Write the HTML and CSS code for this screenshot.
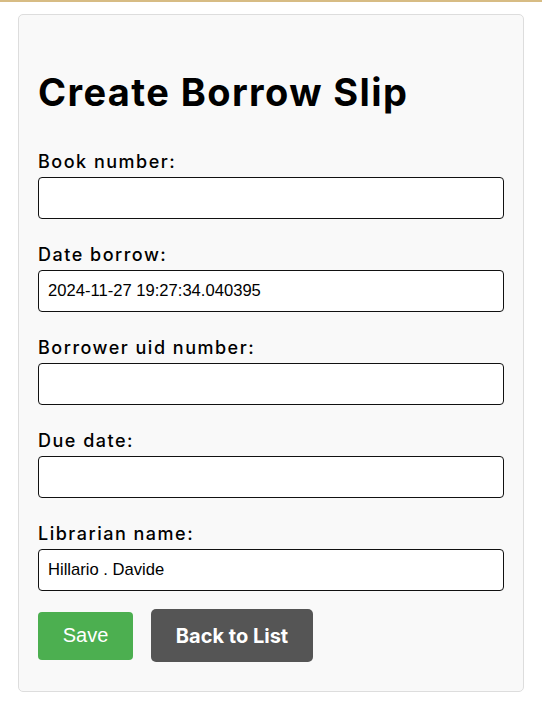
FILE: index.html
```html
<!DOCTYPE html>
<html lang="en">
<head>
<meta charset="utf-8">
<title>Create Borrow Slip</title>
<link rel="stylesheet" href="styles.css">
</head>
<body>
<div class="topbar"></div>
<main class="card">
  <h1 class="title">Create Borrow Slip</h1>
  <form class="form">
    <div class="field">
      <label class="label" for="book">Book number:</label>
      <input class="input" id="book" type="text">
    </div>
    <div class="field">
      <label class="label" for="date">Date borrow:</label>
      <input class="input" id="date" type="text" value="2024-11-27 19:27:34.040395">
    </div>
    <div class="field">
      <label class="label" for="uid">Borrower uid number:</label>
      <input class="input" id="uid" type="text">
    </div>
    <div class="field">
      <label class="label" for="due">Due date:</label>
      <input class="input" id="due" type="text">
    </div>
    <div class="field field-last">
      <label class="label" for="lib">Librarian name:</label>
      <input class="input" id="lib" type="text" value="Hillario . Davide">
    </div>
    <div class="actions">
      <button class="btn btn-save" type="button">Save</button>
      <a class="btn btn-back" href="#">Back to List</a>
    </div>
  </form>
</main>
</body>
</html>
```
FILE: styles.css
```css
* { box-sizing: border-box; }
html, body { margin: 0; padding: 0; background: #ffffff; }
body { font-family: "Inter", "Noto Sans", sans-serif; color: #000; }
.topbar { height: 2px; background: #d7bc84; }
.card {
  width: 506px;
  margin: 12px auto 0;
  background: #f9f9f9;
  border: 1px solid #dddddd;
  border-radius: 5px;
  padding: 20px 19px 29px;
}
.title {
  margin: 34px 0 36px;
  font-size: 38px;
  line-height: 46px;
  font-weight: 700;
  letter-spacing: 1.4px;
}
.form { display: flex; flex-direction: column; }
.field { display: flex; flex-direction: column; gap: 4px; margin-bottom: 25px; }
.field-last { margin-bottom: 18px; }
.label { font-size: 18px; line-height: 22px; font-weight: 500; letter-spacing: 1.5px; }
.input {
  height: 42px;
  width: 100%;
  border: 1px solid #111;
  border-radius: 4px;
  background: #fff;
  padding: 0 9px;
  font-family: "Liberation Sans", Arial, sans-serif;
  font-size: 16.6px;
  color: #000;
  outline: none;
}
.actions { display: flex; align-items: center; gap: 18px; }
.btn { border: none; color: #fff; text-decoration: none; display: inline-flex; align-items: center; justify-content: center; }
.btn-save {
  width: 95px; height: 48px;
  background: #4caf50;
  border-radius: 4px;
  font-family: "Liberation Sans", Arial, sans-serif;
  font-size: 20px;
}
.btn-back {
  width: 162px; height: 53px;
  background: #555555;
  border-radius: 5px;
  font-family: "Inter", "Noto Sans", sans-serif;
  font-weight: 700;
  font-size: 20px;
  letter-spacing: 0px;
}
```
